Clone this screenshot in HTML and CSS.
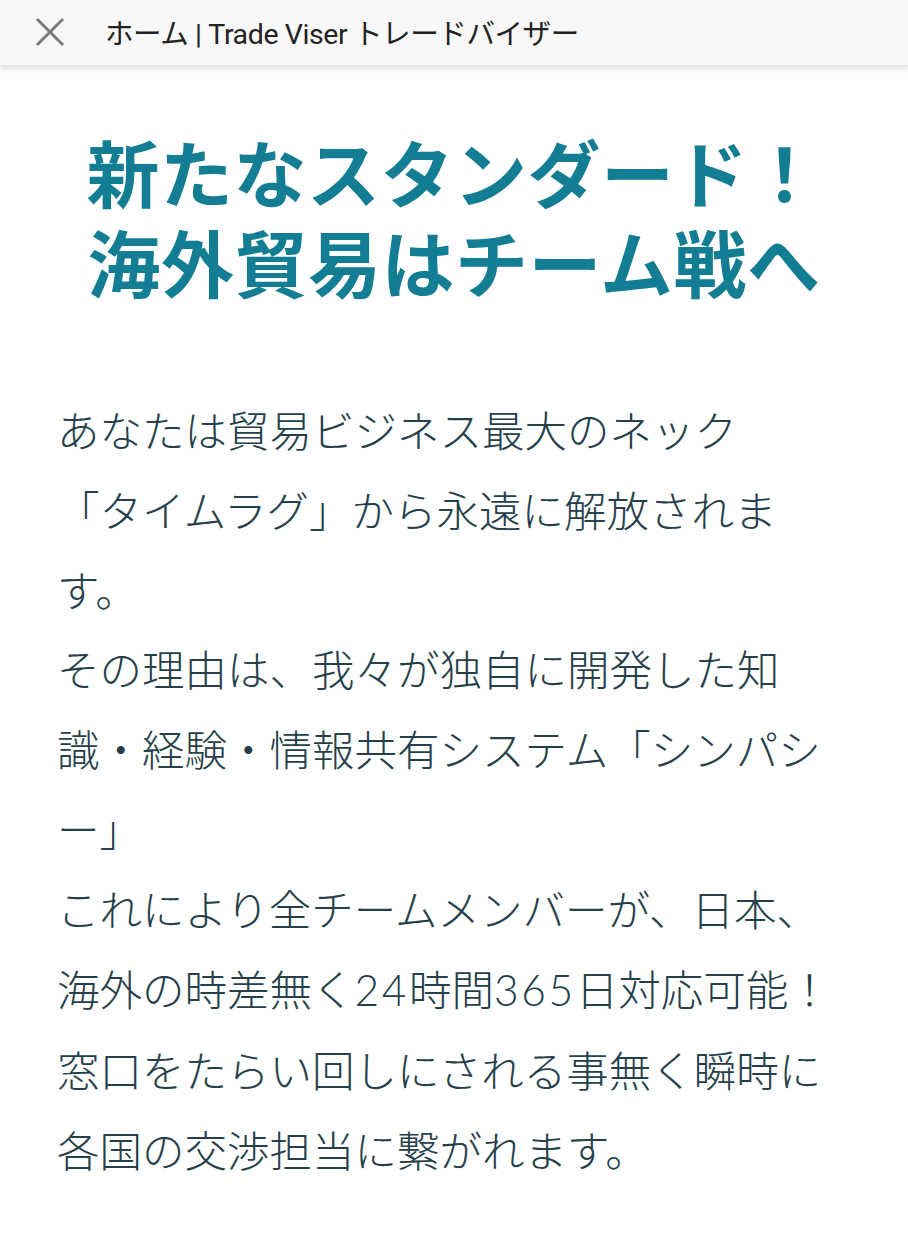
FILE: index.html
```html
<!DOCTYPE html>
<html lang="ja">
<head>
<meta charset="utf-8">
<title>ホーム | Trade Viser トレードバイザー</title>
<link rel="stylesheet" href="styles.css">
</head>
<body>
<header class="topbar">
  <svg class="close" width="30" height="30" viewBox="0 0 30 30" aria-hidden="true">
    <path d="M2 2 L28 28 M28 2 L2 28" stroke="#7a7a7a" stroke-width="3" stroke-linecap="butt" fill="none"/>
  </svg>
  <div class="title">ホーム | Trade Viser トレードバイザー</div>
</header>
<main class="content">
  <h1 class="headline"><span class="hl-line">新たなスタンダード！</span><span class="hl-line">海外貿易はチーム戦へ</span></h1>
  <p class="body">あなたは貿易ビジネス最大のネック<br>「タイムラグ」から永遠に解放されます。<br>その理由は、我々が独自に開発した知識・経験・情報共有システム「シンパシー」<br>これにより全チームメンバーが、日本、海外の時差無く<span class="num">24</span>時間<span class="num">365</span>日対応可能！<br>窓口をたらい回しにされる事無く瞬時に各国の交渉担当に繋がれます。</p>
</main>
</body>
</html>
```
FILE: styles.css
```css
html, body {
  margin: 0;
  padding: 0;
  background: #ffffff;
}
body {
  font-family: "Noto Sans CJK JP", "Noto Sans", sans-serif;
  width: 908px;
  height: 1240px;
  overflow: hidden;
}
.topbar {
  height: 65px;
  background: #f8f8f8;
  border-bottom: 1px solid #e2e2e2;
  box-shadow: 0 3px 5px rgba(0,0,0,0.12);
  display: flex;
  align-items: center;
  position: relative;
  z-index: 1;
}
.close {
  margin-left: 35px;
  margin-top: -2px;
  flex: none;
}
.title {
  margin-left: 40px;
  font-family: Roboto, "Noto Sans CJK JP", sans-serif;
  font-size: 28.5px;
  color: #222222;
  letter-spacing: -0.4px;
  margin-top: -2px;
}
.content {
  padding: 0 57px;
}
.headline {
  margin: 59px 0 0;
  text-align: center;
  font-size: 73px;
  font-weight: 700;
  color: #127d93;
  white-space: nowrap;
  display: flex;
  flex-direction: column;
  align-items: center;
}
.hl-line {
  display: block;
  height: 90px;
  line-height: 90px;
  letter-spacing: 0.5px;
}
.body {
  margin: 84px 0 0;
  font-size: 42.5px;
  line-height: 79.8px;
  font-weight: 300;
  color: #25404b;
  line-break: normal;
}
.num {
  font-family: Lato, "Noto Sans CJK JP", sans-serif;
  font-weight: 300;
  letter-spacing: 2.6px;
}
```
